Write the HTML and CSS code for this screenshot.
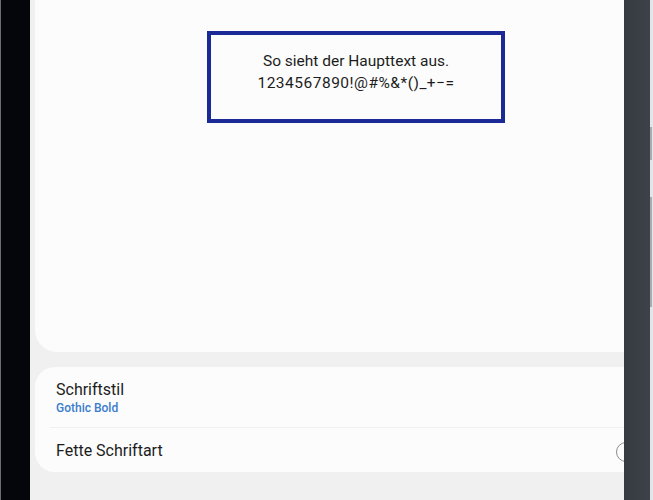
FILE: index.html
```html
<!DOCTYPE html>
<html lang="de">
<head>
<meta charset="utf-8">
<title>Schriftstil</title>
<link rel="stylesheet" href="styles.css">
</head>
<body>
<div class="device">
  <div class="bezel-left"></div>
  <div class="screen">
    <div class="card preview">
      <div class="sample">
        <p class="sample-line">So sieht der Haupttext aus.</p>
        <p class="sample-line sample-digits">1234567890!@#%&amp;*()_+−=</p>
      </div>
    </div>
    <div class="card settings">
      <div class="row row-two">
        <div class="row-text">
          <div class="row-title">Schriftstil</div>
          <div class="row-sub">Gothic Bold</div>
        </div>
      </div>
      <div class="divider"></div>
      <div class="row row-one">
        <div class="row-title">Fette Schriftart</div>
        <span class="switch"></span>
      </div>
    </div>
  </div>
  <div class="bezel-right"></div>
  <div class="edge">
    <span class="edge-btn btn-a"></span>
    <span class="edge-btn btn-b"></span>
  </div>
</div>
</body>
</html>
```

FILE: styles.css
```css
html, body {
  margin: 0;
  padding: 0;
  width: 653px;
  height: 500px;
  overflow: hidden;
  background: #f0f0f0;
  font-family: Roboto, "Liberation Sans", sans-serif;
}

.device {
  display: flex;
  width: 653px;
  height: 500px;
}

.bezel-left {
  width: 29px;
  flex-shrink: 0;
  background: #04060c;
  border-left: 1px solid #6a6d72;
}

.screen {
  width: 589px;
  flex-shrink: 0;
  padding-left: 5px;
  background: #f0f0f0;
  overflow: hidden;
  display: flex;
  flex-direction: column;
  align-items: flex-start;
  gap: 15px;
}

.card {
  width: 610px;
  flex-shrink: 0;
  background: #fcfcfc;
  box-sizing: border-box;
}

.preview {
  height: 352px;
  border-radius: 0 0 22px 22px;
  padding-top: 31px;
}

.sample {
  margin-left: 172px;
  width: 298px;
  height: 92px;
  box-sizing: border-box;
  border: 4px solid #1b2a96;
  padding-top: 15px;
  text-align: center;
  color: #1c1c1c;
}

.sample-line {
  margin: 0;
  font-size: 15.5px;
  line-height: 22px;
}

.sample-digits {
  letter-spacing: 0.5px;
}

.settings {
  border-radius: 20px;
  padding-left: 21px;
}

.row {
  display: flex;
  align-items: center;
  padding-right: 9px;
  color: #1c1c1c;
}

.row-two {
  height: 60px;
  padding-top: 1px;
  box-sizing: border-box;
}

.row-one {
  height: 44px;
  padding-top: 2px;
  box-sizing: border-box;
}

.row-title {
  font-size: 16px;
  line-height: 20px;
}

.row-sub {
  font-size: 12px;
  line-height: 14px;
  font-weight: 500;
  color: #3a7ccd;
  margin-top: 1px;
}

.divider {
  height: 1px;
  margin-left: -6px;
  background: #f0f0f0;
}

.switch {
  margin-left: auto;
  width: 20px;
  height: 20px;
  box-sizing: border-box;
  border: 1.5px solid #8c8c8c;
  border-radius: 50%;
  margin-top: 2px;
}

.bezel-right {
  width: 26px;
  flex-shrink: 0;
  background: linear-gradient(to right, #363a41, #3d4148);
}

.edge {
  width: 3px;
  flex-shrink: 0;
  background: #e4e5e7;
  display: flex;
  flex-direction: column;
}

.edge-btn {
  display: block;
  width: 2px;
  background: #a9acb1;
}

.btn-a {
  margin-top: 127px;
  height: 33px;
}

.btn-b {
  margin-top: 37px;
  height: 110px;
}
```
